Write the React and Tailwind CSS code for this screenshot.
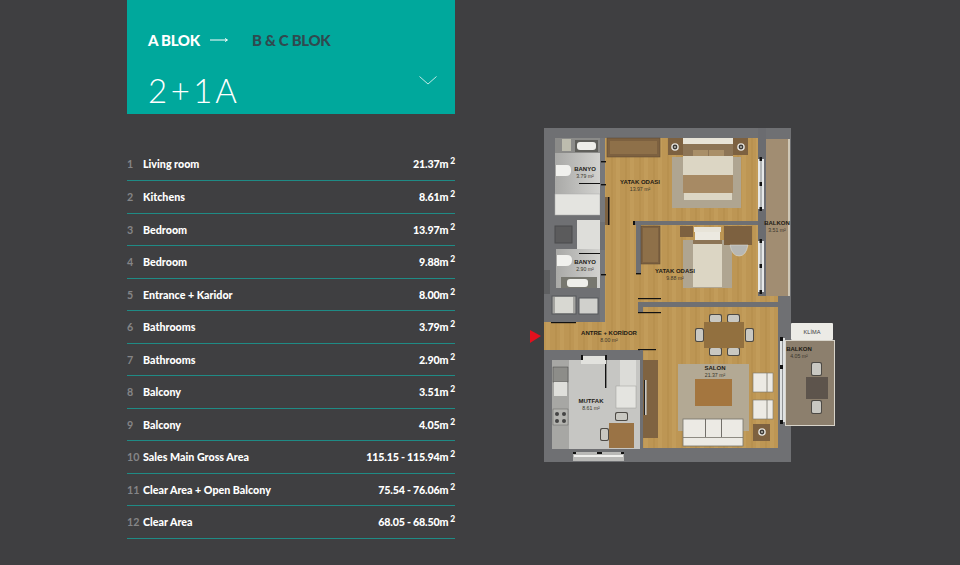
const rows = [
  [1, "Living room", "21.37m"],
  [2, "Kitchens", "8.61m"],
  [3, "Bedroom", "13.97m"],
  [4, "Bedroom", "9.88m"],
  [5, "Entrance + Karidor", "8.00m"],
  [6, "Bathrooms", "3.79m"],
  [7, "Bathrooms", "2.90m"],
  [8, "Balcony", "3.51m"],
  [9, "Balcony", "4.05m"],
  [10, "Sales Main Gross Area", "115.15 - 115.94m"],
  [11, "Clear Area + Open Balcony", "75.54 - 76.06m"],
  [12, "Clear Area", "68.05 - 68.50m"],
];

const WOOD = "#bd9654";
const BROWN = "#7d6140";
const CREAM = "#dcd6c4";
const WALL = "#6f7073";

function Label({ x, y, name, area }) {
  return (
    <g textAnchor="middle" fill="#1d1a14" fontFamily="'Liberation Sans', sans-serif">
      <text x={x} y={y} fontSize="6" fontWeight="700">{name}</text>
      <text x={x} y={y + 6.5} fontSize="5.2" fill="#3a362c">{area}</text>
    </g>
  );
}

function Chair({ x, y, w, h }) {
  return (
    <g>
      <rect x={x} y={y} width={w} height={h} rx="2" fill="#4d4a45" />
      <rect x={x + 1} y={y + 1} width={w - 2} height={h - 2} rx="1.5" fill="#c9c8c2" />
    </g>
  );
}

function Armchair({ y }) {
  return (
    <g>
      <rect x="753" y={y} width="20" height="19" fill="#eceae4" stroke="#77736a" strokeWidth="0.6" />
      <line x1="767" x2="767" y1={y} y2={y + 19} stroke="#77736a" strokeWidth="0.8" />
    </g>
  );
}

function Lamp({ x, y }) {
  return (
    <g>
      <circle cx={x} cy={y} r="3.8" fill="#e6e4de" />
      <circle cx={x} cy={y} r="2.4" fill="#3d3a36" />
      <circle cx={x} cy={y} r="0.9" fill="#c9c8c2" />
    </g>
  );
}

function FloorPlan() {
  return (
    <svg width="310" height="340" viewBox="528 126 310 340" className="block">
      <defs>
        <pattern id="grain" width="14" height="60" patternUnits="userSpaceOnUse">
          <rect width="14" height="60" fill={WOOD} />
          <rect x="0" width="4" height="60" fill="#c29c5a" />
          <rect x="9" width="2" height="60" fill="#b8914f" />
        </pattern>
        <linearGradient id="tile" x1="0" y1="0" x2="1" y2="0">
          <stop offset="0" stopColor="#a9a9a7" />
          <stop offset="1" stopColor="#d2d2cf" />
        </linearGradient>
      </defs>

      {/* entry arrow */}
      <polygon points="530,330 541,336 530,343" fill="#e3101d" />

      {/* shell */}
      <rect x="544" y="128" width="247" height="334" fill={WALL} />

      {/* wood floors */}
      <path d="M605 138H758V296H778V448H643V350H544V322H605Z" fill="url(#grain)" />

      {/* bathroom 1 */}
      <rect x="555" y="138" width="45" height="77" fill="url(#tile)" />
      <rect x="555" y="138" width="45" height="15" fill="#8b8b89" />
      <rect x="562" y="139" width="9" height="12" fill="#bdbcae" />
      <rect x="575" y="140" width="23" height="12" fill="#5f5f5b" />
      <rect x="577" y="142" width="19" height="8" rx="3" fill="#eeeeea" />
      <path d="M556 165H567Q571 165 571 170V171Q571 176 566 176H556Z" fill="#f1f1ee" />
      <rect x="555" y="194" width="45" height="21" fill="#e4e4e0" stroke="#aaa" strokeWidth="0.5" />
      <rect x="579" y="183" width="21" height="1" fill="#111" />
      <rect x="600" y="138" width="5" height="84" fill="#77787b" />
      <rect x="601" y="161" width="5" height="1.4" fill="#111" />
      <rect x="601" y="184" width="5" height="1.4" fill="#111" />
      <rect x="605" y="197" width="5" height="28" fill="#7d6140" />
      <rect x="608" y="197" width="1.2" height="28" fill="#111" />

      {/* shaft + shower */}
      <rect x="555" y="226" width="17" height="17" fill="#5b5b5c" stroke="#4b4b4c" />
      <rect x="577" y="220" width="23" height="29" fill="#dededa" />

      {/* bathroom 2 */}
      <rect x="556" y="249" width="44" height="39" fill="url(#tile)" />
      <path d="M557 255H567Q572 255 572 260Q572 266 566 266H557Z" fill="#f1f1ee" />
      <rect x="561" y="277" width="36" height="11" fill="#77776f" />
      <rect x="567" y="279" width="21" height="8" rx="3" fill="#eeeeea" />
      <rect x="579" y="253" width="21" height="1" fill="#111" />
      <rect x="600" y="250" width="5" height="72" fill="#77787b" />
      <rect x="601" y="274" width="5" height="1.4" fill="#111" />
      <rect x="544" y="270" width="6" height="24" fill="#5e5f61" />
      <rect x="552" y="296" width="24" height="18" fill="#a3a39f" stroke="#55565a" />
      <rect x="555" y="297" width="18" height="16" fill="#d8d8d2" />
      <rect x="579" y="298" width="19" height="16" fill="#d0d0cc" stroke="#55565a" />
      <rect x="551" y="322" width="25" height="1.2" fill="#111" />

      {/* bedroom 1 */}
      <rect x="607" y="138" width="53" height="19" fill={BROWN} stroke="#5a4630" strokeWidth="0.5" />
      <rect x="610" y="141" width="47" height="13" fill="#8e7049" />
      <rect x="668" y="138" width="15" height="17" fill={BROWN} />
      <Lamp x={675} y={147} />
      <rect x="672" y="157" width="69" height="51" fill="#afa591" />
      <rect x="683" y="138" width="50" height="6" fill="#e8e4d8" />
      <rect x="683" y="144" width="50" height="12" fill="#8d7556" />
      <rect x="693" y="150" width="15" height="6" fill="#a98f68" />
      <rect x="709" y="150" width="15" height="6" fill="#a98f68" />
      <rect x="683" y="156" width="50" height="19" fill={CREAM} />
      <rect x="683" y="175" width="50" height="18" fill="#a78a64" />
      <rect x="684" y="193" width="48" height="7" fill={CREAM} />
      <rect x="733" y="138" width="15" height="17" fill={BROWN} />
      <Lamp x={741} y={147} />

      {/* wall between bedrooms */}
      <rect x="635" y="221" width="123" height="4" fill={WALL} />
      <rect x="636" y="221" width="5" height="52" fill={WALL} />
      <rect x="633" y="221" width="2" height="4" fill="#111" />
      <rect x="636" y="273" width="5" height="1.4" fill="#111" />

      {/* bedroom 2 */}
      <rect x="641" y="226" width="19" height="38" fill={BROWN} stroke="#5a4630" strokeWidth="0.5" />
      <rect x="643" y="228" width="15" height="34" fill="#8e7049" />
      <rect x="683" y="240" width="49" height="48" fill="#afa591" />
      <rect x="680" y="226" width="13" height="11" fill={BROWN} />
      <rect x="724" y="226" width="28" height="19" fill={BROWN} />
      <rect x="694" y="227" width="27" height="5" fill="#e8e4d8" />
      <rect x="695" y="232" width="25" height="8" fill="#ece9e0" />
      <rect x="693" y="240" width="29" height="4" fill="#8d7556" />
      <rect x="693" y="244" width="29" height="43" fill={CREAM} />
      <path d="M730 245H748Q746 256 739 256Q732 256 730 245Z" fill="#b7b7b3" stroke="#e3e3df" strokeWidth="0.5" />

      {/* balcony 1 */}
      <rect x="758" y="128" width="8" height="168" fill="#6b6c70" />
      <rect x="758" y="159" width="6" height="50" fill="#e6e8e8" />
      <rect x="758" y="241" width="6" height="51" fill="#e6e8e8" />
      <rect x="760.5" y="159" width="1" height="50" fill="#7d8081" />
      <rect x="760.5" y="241" width="1" height="51" fill="#7d8081" />
      {[159, 184, 209, 241, 266, 292].map((y) => (
        <rect key={y} x="759.5" y={y - 2} width="2.5" height="4" fill="#111" />
      ))}
      <rect x="766" y="139" width="22" height="157" fill="#a18d72" />
      <rect x="788" y="139" width="2" height="157" fill="#cfc7b6" />

      {/* corridor / salon wall */}
      <rect x="638" y="302" width="140" height="5" fill={WALL} />
      <rect x="638" y="298" width="23" height="1.2" fill="#111" />
      <rect x="638" y="312" width="23" height="1.2" fill="#111" />
      <rect x="638" y="307" width="5" height="5" fill={WALL} />
      <rect x="544" y="350" width="94" height="10" fill={WALL} />
      <rect x="638" y="349" width="18" height="1.2" fill="#111" />

      {/* kitchen */}
      <rect x="552" y="360" width="88" height="89" fill="#c6c6c3" />
      <rect x="552" y="360" width="17" height="89" fill="#a7a7a4" />
      <rect x="553" y="367" width="15" height="15" fill="#8d8d89" stroke="#333" strokeWidth="0.4" />
      <rect x="554" y="382" width="13" height="14" fill="#dfdfdb" />
      <rect x="553" y="409" width="15" height="16" fill="#b4b4b0" stroke="#555" strokeWidth="0.4" />
      <circle cx="557" cy="414" r="2" fill="#444" />
      <circle cx="564" cy="414" r="2" fill="#444" />
      <circle cx="557" cy="421" r="2" fill="#444" />
      <circle cx="564" cy="421" r="2" fill="#444" />
      <rect x="620" y="360" width="16" height="26" fill="#dcdcd8" />
      <rect x="616" y="386" width="20" height="22" fill="#e4e4e0" stroke="#9d9d99" strokeWidth="0.5" />
      <rect x="605" y="360" width="1.4" height="28" fill="#111" />
      <rect x="581" y="356" width="25" height="8" fill="#e2e2de" />
      <rect x="581" y="355" width="2" height="5" fill="#111" />
      <rect x="605" y="355" width="2" height="5" fill="#111" />
      <Chair x={615} y={412} w={13} h={9} />
      <Chair x={600} y={428} w={9} h={13} />
      <rect x="609" y="423" width="25" height="25" fill="#9a7345" />
      <rect x="573" y="452" width="51" height="9" fill="#b9b9b7" />
      <rect x="574" y="455" width="49" height="2" fill="#efefed" />
      <rect x="573" y="452" width="3" height="2" fill="#111" />
      <rect x="597" y="452" width="5" height="2" fill="#111" />
      <rect x="621" y="452" width="3" height="2" fill="#111" />

      {/* kitchen wall + media unit */}
      <rect x="640" y="350" width="3" height="112" fill={WALL} />
      <rect x="643" y="360" width="15" height="78" fill="#7f6341" />
      <rect x="645" y="380" width="1.6" height="35" fill="#c9c9c4" />
      <rect x="644" y="380" width="1" height="35" fill="#222" />

      {/* dining set */}
      <Chair x={709} y={314} w={13} h={9} />
      <Chair x={727} y={314} w={13} h={9} />
      <Chair x={709} y={347} w={13} h={9} />
      <Chair x={727} y={347} w={13} h={9} />
      <Chair x={695} y={328} w={9} h={14} />
      <Chair x={745} y={328} w={9} h={14} />
      <rect x="704" y="322" width="40" height="26" fill="#92703f" />

      {/* salon */}
      <rect x="678" y="364" width="71" height="67" fill="#b3a994" />
      <rect x="695" y="379" width="37" height="27" fill="#a4763f" />
      <rect x="683" y="419" width="60" height="27" fill="#eceae4" stroke="#77736a" strokeWidth="0.8" />
      <rect x="683" y="437" width="60" height="0.8" fill="#77736a" />
      <rect x="705" y="419" width="0.8" height="18" fill="#55524c" />
      <rect x="721" y="419" width="0.8" height="18" fill="#55524c" />
      <Armchair y={373} />
      <Armchair y={400} />
      <rect x="753" y="424" width="17" height="17" fill={BROWN} />
      <Lamp x={762} y={432} />

      {/* balcony 2 */}
      <rect x="791" y="323" width="42" height="17" rx="1" fill="#ecebe6" />
      <rect x="785" y="340" width="50" height="86" fill="#d8d4ca" />
      <rect x="786" y="341" width="48" height="84" fill="#8c7f6d" />
      <rect x="780" y="338" width="5" height="84" fill="#e0e2e2" />
      <rect x="782" y="338" width="0.8" height="84" fill="#7d8081" />
      {[339, 367, 422].map((y) => (
        <rect key={y} x="780" y={y - 2} width="3" height="4" fill="#111" />
      ))}
      <Chair x={811} y={362} w={11} h={14} />
      <Chair x={811} y={400} w={11} h={14} />
      <rect x="806" y="377" width="22" height="22" fill="#5d544c" />

      <Label x={585} y={171} name="BANYO" area="3.79 m²" />
      <Label x={640} y={184} name="YATAK ODASI" area="13.97 m²" />
      <Label x={585} y={264} name="BANYO" area="2.90 m²" />
      <Label x={675} y={273} name="YATAK ODASI" area="9.88 m²" />
      <Label x={777} y={225} name="BALKON" area="3.51 m²" />
      <Label x={609} y={335} name="ANTRE + KORİDOR" area="8.00 m²" />
      <Label x={591} y={403} name="MUTFAK" area="8.61 m²" />
      <Label x={715} y={370} name="SALON" area="21.37 m²" />
      <Label x={799} y={351} name="BALKON" area="4.05 m²" />
      <text x="812" y="334" textAnchor="middle" fontSize="5.6" fill="#3c3c3c" fontFamily="'Liberation Sans', sans-serif">KLİMA</text>
    </svg>
  );
}

export default function App() {
  return (
    <div className="flex w-[960px] h-[565px] overflow-hidden bg-[#3f3f41] pl-[127px] font-['Lato',sans-serif]">
      <div className="w-[328px]">
        <div className="h-[114px] bg-[#00a89c] pl-[21px] pr-[18px] pt-[30px]">
          <div className="flex items-center h-[20px] text-[15px] font-black">
            <span className="text-white w-[62px] tracking-[-0.3px]">A BLOK</span>
            <svg width="18" height="6" viewBox="0 0 18 6" className="text-white">
              <path d="M0 3H17M15 1.5L17.5 3L15 4.5" stroke="currentColor" strokeWidth="1" fill="none" />
            </svg>
            <span className="ml-[24px] text-[#2f4a4f] tracking-[-0.3px]">B &amp; C BLOK</span>
          </div>
          <div className="flex items-center justify-between mt-[20px]">
            <span className="text-[33px] leading-[40px] font-light text-white tracking-[3.5px] [word-spacing:-12px]">2+1 A</span>
            <svg width="18" height="9" viewBox="0 0 18 9" className="-mt-[19px]">
              <path d="M0.5 0.5L9 8L17.5 0.5" stroke="#bfe9e5" strokeWidth="1" fill="none" />
            </svg>
          </div>
        </div>
        <div className="mt-[34px]">
          {rows.map(([n, name, value]) => (
            <div
              key={n}
              className={`flex items-center border-b border-[#1f8b85] text-[10.7px] font-black text-white ${n === 1 || n % 2 === 0 ? "h-[33px]" : "h-[32px] pt-[1px]"}`}
            >
              <span className="w-[16px] text-[#858587] shrink-0 font-bold">{n}</span>
              <span>{name}</span>
              <span className="ml-auto tracking-[-0.2px]">
                {value}
                <sup className="ml-[2px] text-[8.5px] -top-[4px] leading-none font-black">2</sup>
              </span>
            </div>
          ))}
        </div>
      </div>
      <div className="ml-[73px] mt-[126px]">
        <FloorPlan />
      </div>
    </div>
  );
}
